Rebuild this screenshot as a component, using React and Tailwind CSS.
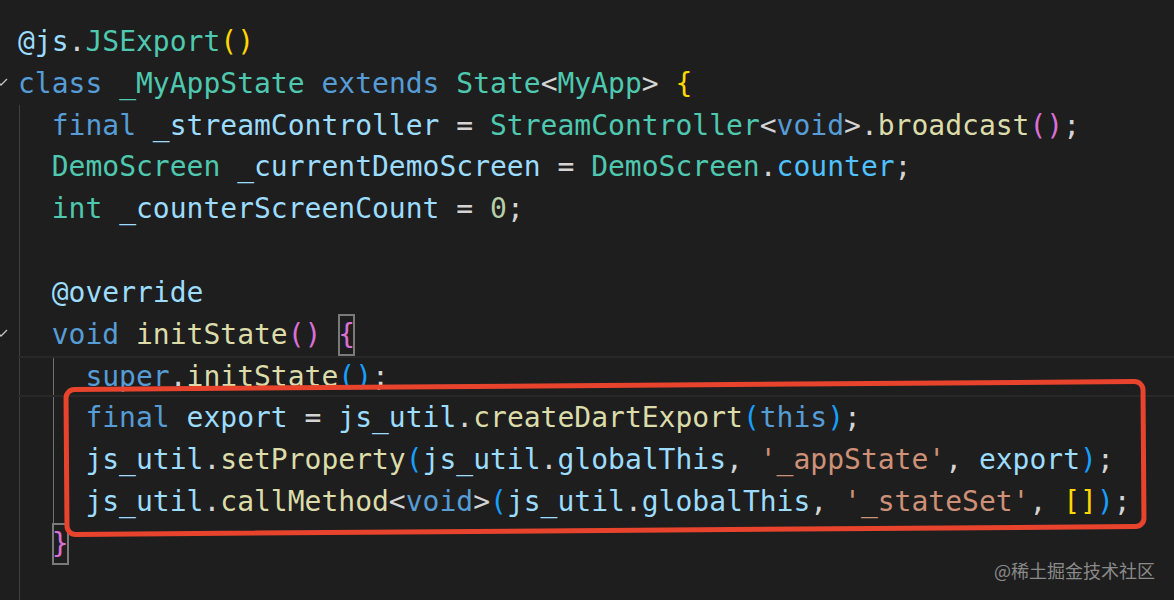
import React from "react";

const K = "text-[#569cd6]";
const T = "text-[#4ec9b0]";
const V = "text-[#9cdcfe]";
const F = "text-[#dcdcaa]";
const S = "text-[#ce9178]";
const N = "text-[#b5cea8]";
const P = "text-[#d4d4d4]";
const G = "text-[#ffd700]";
const O = "text-[#da70d6]";
const B = "text-[#179fff]";
const E = "text-[#4fc1ff]";

const lines = [
  { indent: 0, tokens: [["@js", V], [".", P], ["JSExport", T], ["()", G]] },
  {
    indent: 0,
    fold: true,
    tokens: [
      ["class", K], [" ", P], ["_MyAppState", T], [" ", P], ["extends", K], [" ", P],
      ["State", T], ["<", P], ["MyApp", T], [">", P], [" ", P], ["{", G],
    ],
  },
  {
    indent: 1,
    tokens: [
      ["final", K], [" ", P], ["_streamController", V], [" = ", P], ["StreamController", T],
      ["<", P], ["void", K], [">", P], [".", P], ["broadcast", F], ["()", O], [";", P],
    ],
  },
  {
    indent: 1,
    tokens: [
      ["DemoScreen", T], [" ", P], ["_currentDemoScreen", V], [" = ", P], ["DemoScreen", T],
      [".", P], ["counter", E], [";", P],
    ],
  },
  { indent: 1, tokens: [["int", T], [" ", P], ["_counterScreenCount", V], [" = ", P], ["0", N], [";", P]] },
  { indent: 1, tokens: [] },
  { indent: 1, tokens: [["@override", V]] },
  {
    indent: 1,
    fold: true,
    tokens: [["void", K], [" ", P], ["initState", F], ["()", O], [" ", P]],
    box: ["{", O],
  },
  {
    indent: 2,
    active: true,
    current: true,
    tokens: [["super", K], [".", P], ["initState", F], ["()", B], [";", P]],
  },
  {
    indent: 2,
    active: true,
    tokens: [
      ["final", K], [" ", P], ["export", V], [" = ", P], ["js_util", V], [".", P],
      ["createDartExport", F], ["(", B], ["this", K], [")", B], [";", P],
    ],
  },
  {
    indent: 2,
    active: true,
    tokens: [
      ["js_util", V], [".", P], ["setProperty", F], ["(", B], ["js_util", V], [".", P],
      ["globalThis", V], [", ", P], ["'_appState'", S], [", ", P], ["export", V], [")", B], [";", P],
    ],
  },
  {
    indent: 2,
    active: true,
    tokens: [
      ["js_util", V], [".", P], ["callMethod", F], ["<", P], ["void", K], [">", P], ["(", B],
      ["js_util", V], [".", P], ["globalThis", V], [", ", P], ["'_stateSet'", S], [", ", P],
      ["[]", G], [")", B], [";", P],
    ],
  },
  { indent: 1, tokens: [], box: ["}", O] },
  { indent: 1, tokens: [] },
  { indent: 1, tokens: [] },
];

function Chevron() {
  return (
    <svg width="10" height="12" viewBox="0 0 10 12" className="block">
      <polyline points="-5,1 1,7 7,1" fill="none" stroke="#c5c5c5" strokeWidth="1.3" />
    </svg>
  );
}

export default function App() {
  return (
    <div className="relative w-[1174px] h-[600px] overflow-hidden bg-[#1e1e1e] flex font-['DejaVu_Sans_Mono',monospace] text-[28px] text-[#d4d4d4]">
      {/* gutter */}
      <div className="w-[18px] shrink-0 flex flex-col pt-[21px]">
        {lines.map((l, i) => (
          <div key={i} className="h-[41.83px] shrink-0 flex items-center">
            {l.fold ? <Chevron /> : null}
          </div>
        ))}
      </div>
      {/* code */}
      <div className="flex-1 flex flex-col pt-[21px]">
        {lines.map((l, i) => (
          <div
            key={i}
            className={
              "h-[41.83px] shrink-0 whitespace-pre flex items-stretch " +
              (l.current ? "border-y-2 border-[#282828] leading-[37.83px]" : "leading-[41.83px]")
            }
          >
            {l.indent >= 1 ? (
              <span className="inline-block w-[2ch] shrink-0 border-l border-[#404040] ml-px -mr-px" />
            ) : null}
            {l.indent >= 2 ? (
              <span
                className={
                  "inline-block w-[2ch] shrink-0 border-l ml-px -mr-px " +
                  (l.active ? "border-[#707070]" : "border-[#404040]")
                }
              />
            ) : null}
            <span>
              {l.tokens.map(([t, c], j) => (
                <span key={j} className={c}>
                  {t}
                </span>
              ))}
            </span>
            {l.box ? (
              <span className={"inline-block outline-2 outline-[#7a7a7a] -outline-offset-2 " + l.box[1]}>
                {l.box[0]}
              </span>
            ) : null}
          </div>
        ))}
      </div>

      {/* annotation box */}
      <div className="absolute left-[64px] top-[383px] w-[1082px] h-[150px] border-[5px] border-[#e8442d] rounded-[11px] rotate-[-0.42deg]" />

      {/* watermark */}
      <div className="absolute right-[19px] top-[556px] text-[18px] leading-[28px] text-[#8a8a8a] font-['Noto_Sans_CJK_SC',sans-serif]">
        @稀土掘金技术社区
      </div>
    </div>
  );
}
